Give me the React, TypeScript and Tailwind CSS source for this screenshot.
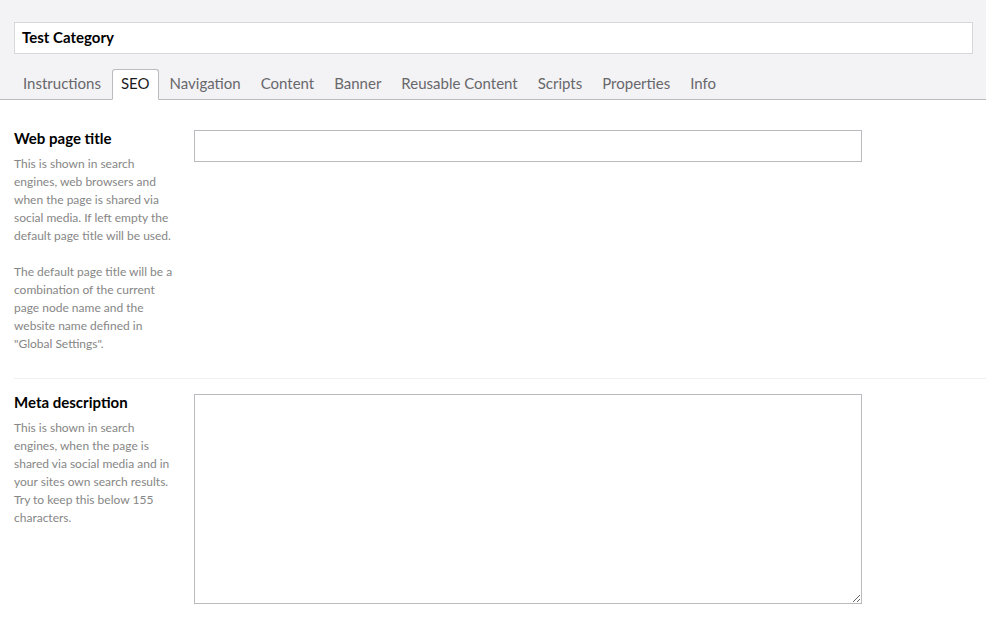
const TABS = [
  "Instructions",
  "SEO",
  "Navigation",
  "Content",
  "Banner",
  "Reusable Content",
  "Scripts",
  "Properties",
  "Info",
];

function Property({
  label,
  children,
  control,
}: {
  label: string;
  children: React.ReactNode;
  control: React.ReactNode;
}) {
  return (
    <div className="flex gap-[20px]">
      <div className="w-[160px] shrink-0">
        <div className="text-[15px] font-bold leading-[16px] text-[#000]">{label}</div>
        <div className="mt-[9px] text-[12px] leading-[18px] text-[#868686]">{children}</div>
      </div>
      <div className="w-[668px]">{control}</div>
    </div>
  );
}

export default function App() {
  return (
    <div className="h-[624px] w-[986px] overflow-hidden bg-white font-['Lato','Noto_Sans',sans-serif]">
      <div className="border-b border-[#bbbabf] bg-[#f3f3f5]">
        <div className="pl-[14px] pr-[13px] pt-[22px]">
          <div className="flex h-[32px] items-center border border-[#d8d7d9] bg-white px-[7px] pb-[3px] text-[15px] font-bold leading-[18px] text-[#000]">
            Test Category
          </div>
        </div>
        <div className="mt-[15px] flex gap-[2px] px-[14px]">
          {TABS.map((t) => (
            <div
              key={t}
              className={`-mb-px flex h-[31px] items-center rounded-t-[3px] border px-[8px] pb-[3px] text-[15px] ${
                t === "SEO"
                  ? "border-[#bbbabf] border-b-white bg-white text-[#1b1b1b]"
                  : "border-transparent text-[#68676b]"
              }`}
            >
              {t}
            </div>
          ))}
        </div>
      </div>

      <div className="pl-[14px] pt-[30px]">
        <Property
          label="Web page title"
          control={<div className="h-[32px] border border-[#bbbabf] bg-white" />}
        >
          <p>
            This is shown in search engines, web browsers and when the page is shared via social
            media. If left empty the default page title will be used.
          </p>
          <p className="mt-[18px]">
            The default page title will be a combination of the current page node name and the
            website name defined in "Global Settings".
          </p>
        </Property>
        <div className="mb-[15px] mt-[25px] border-t border-[#f0f0f0]" />
        <Property
          label="Meta description"
          control={
            <textarea className="block h-[210px] w-full resize-y border border-[#bbbabf] bg-white outline-none" />
          }
        >
          <p>
            This is shown in search engines, when the page is shared via social media and in your
            sites own search results. Try to keep this below 155 characters.
          </p>
        </Property>
      </div>
    </div>
  );
}
